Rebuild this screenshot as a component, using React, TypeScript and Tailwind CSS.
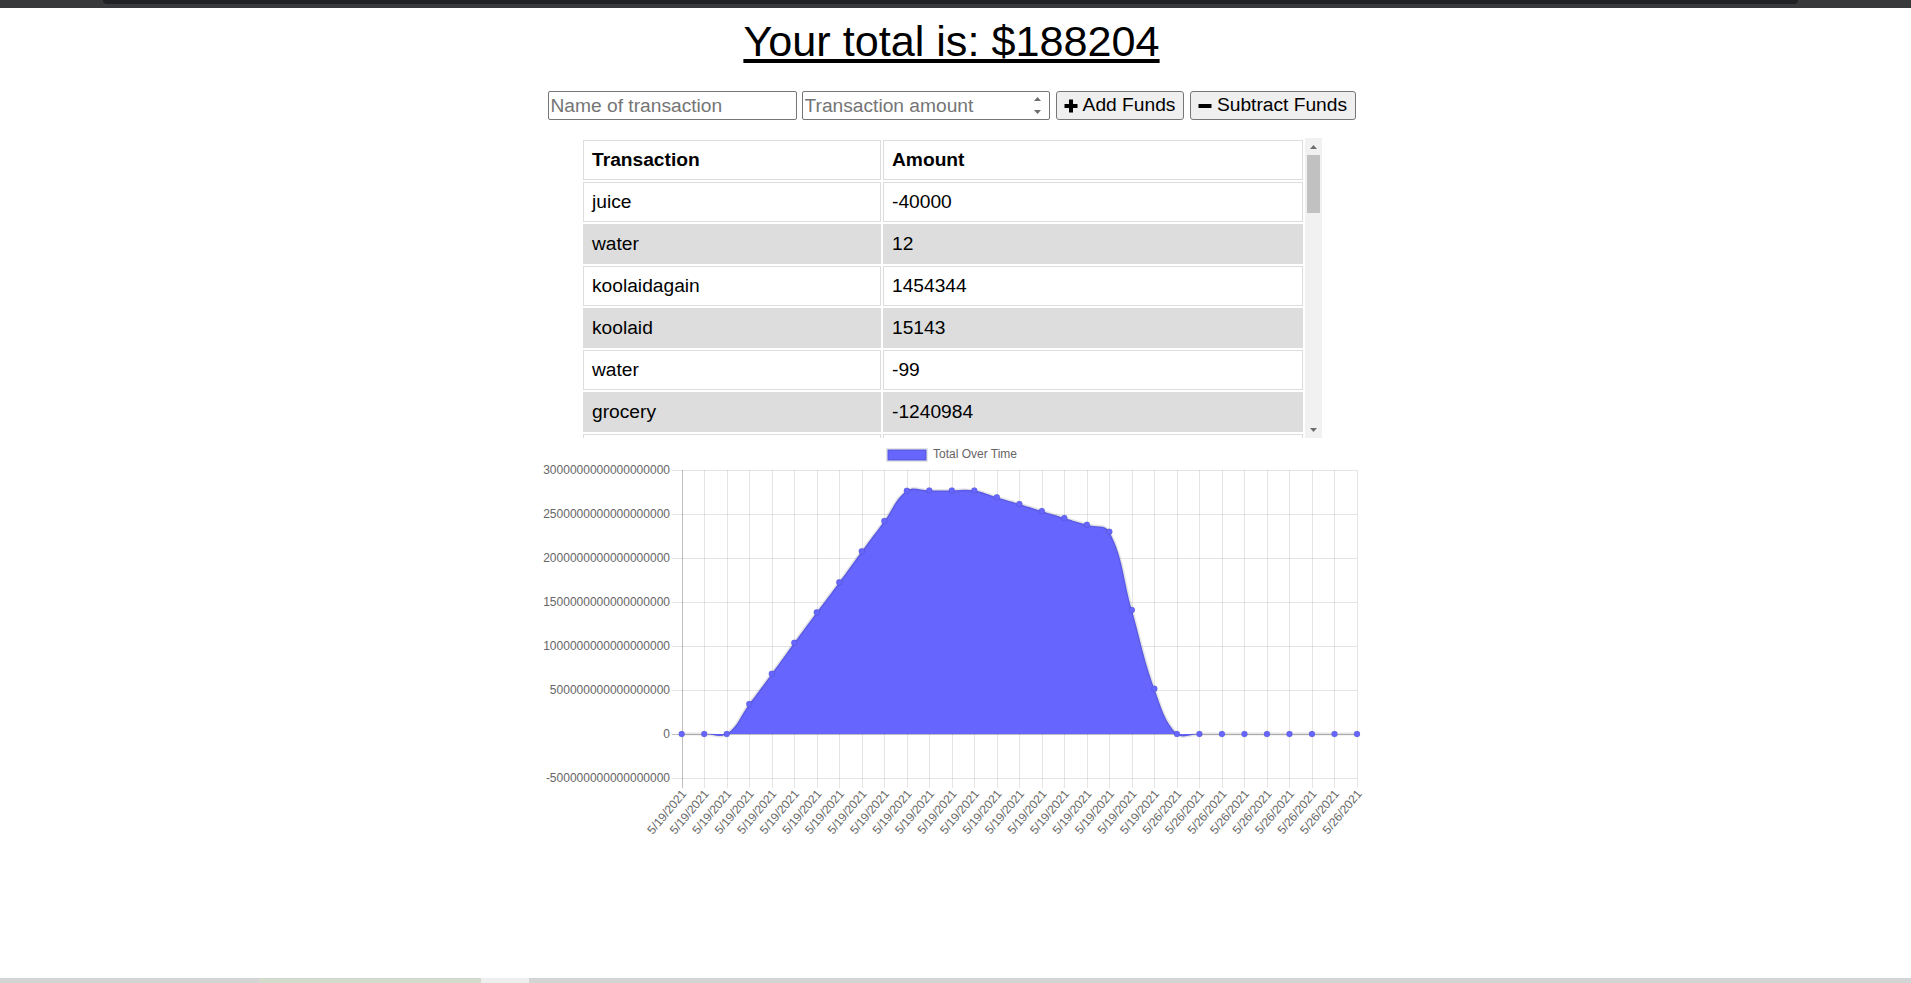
import React from "react";

const VALUES = [
  0, 0, 0, 0.341, 0.685, 1.037, 1.383, 1.724, 2.076, 2.42, 2.765, 2.768, 2.768, 2.768, 2.69, 2.614,
  2.534, 2.455, 2.378, 2.299, 1.409, 0.515, 0, 0, 0, 0, 0, 0, 0, 0, 0,
];

const ROWS: [string, string][] = [
  ["juice", "-40000"],
  ["water", "12"],
  ["koolaidagain", "1454344"],
  ["koolaid", "15143"],
  ["water", "-99"],
  ["grocery", "-1240984"],
  ["coffee", "-250"],
];

const Y_LABELS = [
  "3000000000000000000",
  "2500000000000000000",
  "2000000000000000000",
  "1500000000000000000",
  "1000000000000000000",
  "500000000000000000",
  "0",
  "-500000000000000000",
];

function Chart() {
  const L = 139.7;
  const R = 815;
  const T = 32;
  const B = 340;
  const Z = 296;
  const K = 88;
  const n = VALUES.length;
  const step = (R - L) / (n - 1);
  const pts = VALUES.map((v, i) => ({ x: L + step * i, y: Z - v * K }));
  const cx = (x: number) => Math.min(Math.max(x, L), R);
  const cy = (y: number) => Math.min(Math.max(y, T), B);
  const cps = pts.map((p, i) => {
    const prev = pts[i - 1] ?? p;
    const next = pts[i + 1] ?? p;
    const d01 = Math.hypot(p.x - prev.x, p.y - prev.y);
    const d12 = Math.hypot(next.x - p.x, next.y - p.y);
    const s01 = d01 / (d01 + d12) || 0;
    const s12 = d12 / (d01 + d12) || 0;
    const fa = 0.4 * s01;
    const fb = 0.4 * s12;
    return {
      px: cx(p.x - fa * (next.x - prev.x)),
      py: cy(p.y - fa * (next.y - prev.y)),
      nx: cx(p.x + fb * (next.x - prev.x)),
      ny: cy(p.y + fb * (next.y - prev.y)),
    };
  });
  let line = `M${pts[0].x},${pts[0].y}`;
  for (let i = 1; i < n; i++) {
    line += ` C${cps[i - 1].nx},${cps[i - 1].ny} ${cps[i].px},${cps[i].py} ${pts[i].x},${pts[i].y}`;
  }
  const area = `${line} L${pts[n - 1].x},${Z} L${pts[0].x},${Z} Z`;
  const font = "'Liberation Sans', Arial, sans-serif";

  return (
    <svg width={819} height={410} className="block overflow-visible">
      <rect x={345.5} y={11.5} width={39} height={11} fill="#6666ff" stroke="rgba(0,0,0,0.1)" strokeWidth={3} />
      <text x={391} y={17} fontSize={12} fill="#666" fontFamily={font} dominantBaseline="middle">
        Total Over Time
      </text>

      {Y_LABELS.map((lab, i) => {
        const y = T + 44 * i + 0.5;
        return (
          <g key={lab}>
            <line
              x1={L - 10}
              x2={R}
              y1={y}
              y2={y}
              stroke={i === 6 ? "rgba(0,0,0,0.25)" : "rgba(0,0,0,0.1)"}
              strokeWidth={1}
            />
            <text
              x={128}
              y={y}
              fontSize={12}
              fill="#666"
              fontFamily={font}
              textAnchor="end"
              dominantBaseline="middle"
            >
              {lab}
            </text>
          </g>
        );
      })}

      {pts.map((p, j) => {
        const x = Math.round(p.x) + 0.5;
        return (
          <line
            key={j}
            x1={x}
            x2={x}
            y1={T}
            y2={B + 10}
            stroke={j === 0 ? "rgba(0,0,0,0.25)" : "rgba(0,0,0,0.1)"}
            strokeWidth={1}
          />
        );
      })}

      {pts.map((p, j) => {
        const ax = p.x + 3;
        const ay = 354;
        return (
          <text
            key={`l${j}`}
            x={ax}
            y={ay}
            fontSize={12}
            fill="#666"
            fontFamily={font}
            textAnchor="end"
            dominantBaseline="middle"
            transform={`rotate(-50 ${ax} ${ay})`}
          >
            {j < 22 ? "5/19/2021" : "5/26/2021"}
          </text>
        );
      })}

      <path d={area} fill="#6666ff" />
      <path d={line} fill="none" stroke="rgba(0,0,0,0.1)" strokeWidth={3} />
      {pts.map((p, j) => (
        <circle key={`c${j}`} cx={p.x} cy={p.y} r={3} fill="#6666ff" stroke="rgba(0,0,0,0.1)" strokeWidth={1} />
      ))}
    </svg>
  );
}

function PlusIcon() {
  return (
    <svg width="14" height="14" viewBox="0 0 14 14">
      <path d="M5 0.5h4v4.5h4.5v4h-4.5v4.5h-4v-4.5h-4.5v-4h4.5z" fill="#000" />
    </svg>
  );
}

function MinusIcon() {
  return (
    <svg width="14" height="14" viewBox="0 0 14 14">
      <rect x="0.5" y="5" width="13" height="4" rx="0.5" fill="#000" />
    </svg>
  );
}

function Tri({ up }: { up: boolean }) {
  return (
    <svg width="7" height="4" viewBox="0 0 7 4">
      <polygon points={up ? "3.5,0 7,4 0,4" : "0,0 7,0 3.5,4"} fill="#6e6e6e" />
    </svg>
  );
}

export default function App() {
  return (
    <div className="flex h-[983px] w-full flex-col overflow-hidden bg-white font-['Liberation_Sans',Arial,sans-serif] text-black">
      <div className="flex h-2 shrink-0 bg-[#38393b]">
        <div className="w-[103px]" />
        <div className="h-[4px] flex-1 rounded-b-[5px] bg-[#202124]" />
        <div className="w-[113px]" />
      </div>

      <main className="flex flex-1 flex-col items-center pr-2">
        <div className="mt-[8px] text-center text-[43.2px] leading-[50px] underline">
          Your total is: $188204
        </div>

        <div className="mt-[25px] flex items-center text-[19.2px]">
          <input
            type="text"
            placeholder="Name of transaction"
            className="h-[29px] w-[249px] rounded-[2px] border border-[#767676] bg-white px-[2px] text-[19.2px] outline-none placeholder:text-[#757575]"
          />
          <div className="ml-[5px] flex h-[29px] w-[248px] items-center rounded-[2px] border border-[#767676] bg-white">
            <input
              type="text"
              placeholder="Transaction amount"
              className="h-full min-w-0 flex-1 bg-transparent px-[2px] text-[19.2px] outline-none placeholder:text-[#757575]"
            />
            <div className="mr-[4px] flex h-[21px] w-[15px] flex-col items-center justify-between py-[2px]">
              <Tri up />
              <Tri up={false} />
            </div>
          </div>
          <button className="ml-[6px] flex h-[29px] w-[128px] items-center justify-center gap-[5px] rounded-[3px] border border-[#767676] bg-[#efefef] text-[19.2px]">
            <PlusIcon />
            <span>Add Funds</span>
          </button>
          <button className="ml-[6px] flex h-[29px] w-[166px] items-center justify-center gap-[5px] rounded-[3px] border border-[#767676] bg-[#efefef] text-[19.2px]">
            <MinusIcon />
            <span>Subtract Funds</span>
          </button>
        </div>

        <div className="mt-[18px] flex h-[300px] w-[741px]">
          <div className="h-full flex-1 overflow-hidden">
            <table className="w-full border-separate border-spacing-[2px] text-left text-[19.2px] leading-[22px]">
              <thead>
                <tr>
                  <th className="w-[298px] border border-[#ddd] px-[8px] py-[8px] font-bold">Transaction</th>
                  <th className="border border-[#ddd] px-[8px] py-[8px] font-bold">Amount</th>
                </tr>
              </thead>
              <tbody>
                {ROWS.map(([name, amt], i) => (
                  <tr key={i} className={i % 2 === 1 ? "bg-[#dddddd]" : "bg-white"}>
                    <td className="border border-[#ddd] px-[8px] py-[8px]">{name}</td>
                    <td className="border border-[#ddd] px-[8px] py-[8px]">{amt}</td>
                  </tr>
                ))}
              </tbody>
            </table>
          </div>
          <div className="flex h-full w-[17px] flex-col bg-[#f1f1f1]">
            <div className="flex h-[17px] items-center justify-center">
              <Tri up />
            </div>
            <div className="mx-[2px] h-[58px] bg-[#c1c1c1]" />
            <div className="flex-1" />
            <div className="flex h-[17px] items-center justify-center">
              <Tri up={false} />
            </div>
          </div>
        </div>

        <Chart />
      </main>

      <div className="flex h-[5px] shrink-0">
        <div className="w-[259px] bg-[#d4d4d4]" />
        <div className="w-[222px] bg-[#d5dbcc]" />
        <div className="w-[48px] bg-[#eeeeee]" />
        <div className="flex-1 bg-[#d4d4d4]" />
      </div>
    </div>
  );
}
